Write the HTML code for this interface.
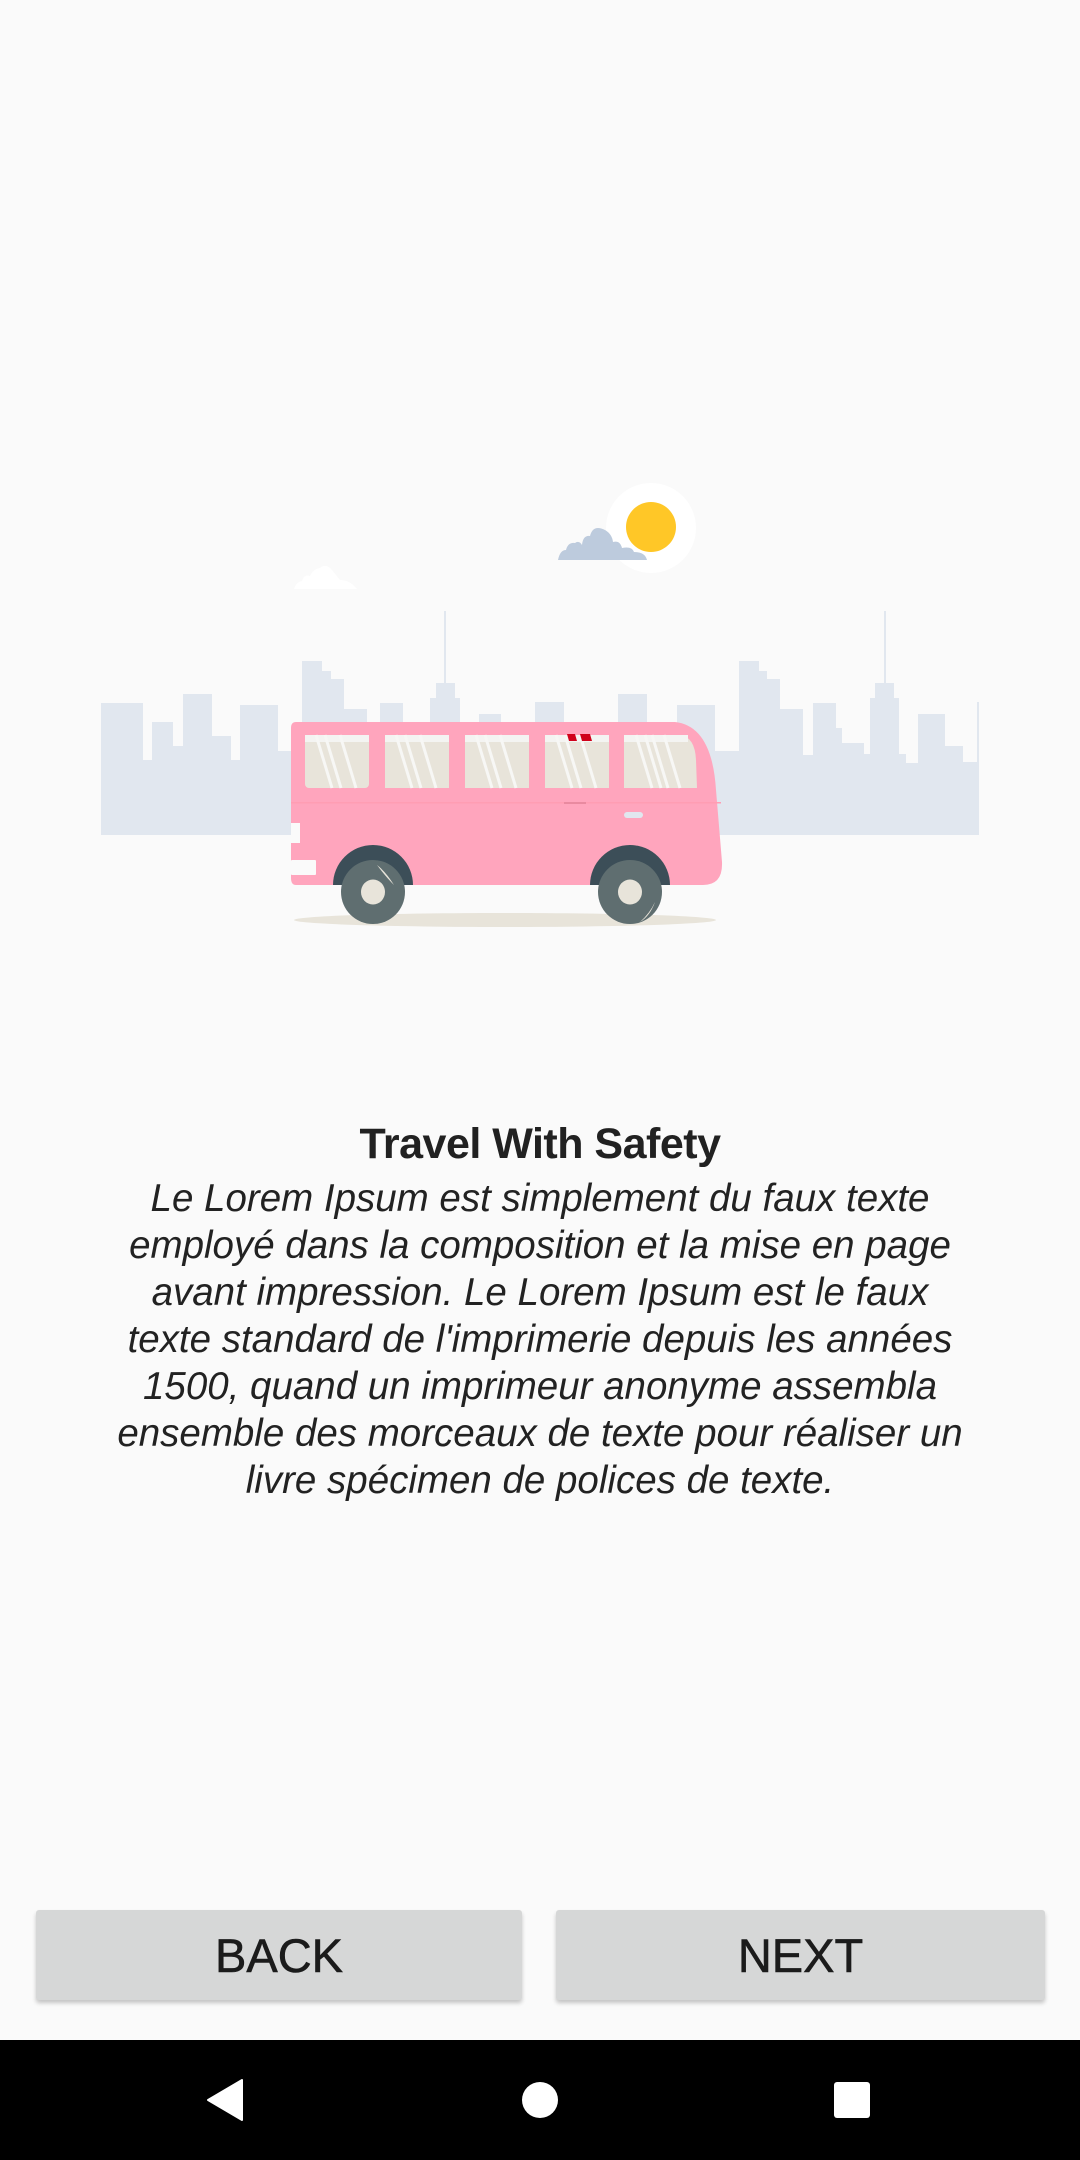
<!DOCTYPE html>
<html><head><meta charset="utf-8"><style>
html,body{margin:0;padding:0}
body{width:1080px;height:2160px;background:#FAFAFA;position:relative;overflow:hidden;font-family:"Liberation Sans",sans-serif}
.t{position:absolute;left:0;width:1080px;text-align:center;color:#212121;white-space:nowrap}
#title{top:1119px;font-size:43px;font-weight:bold;line-height:50px;letter-spacing:-0.5px}
#para{top:1175px;font-size:38.5px;font-style:italic;line-height:47px;color:#222}
.btn{position:absolute;top:1910px;height:90px;background:#D6D7D7;border-radius:3px;box-shadow:0 3px 4px rgba(0,0,0,0.22);font-size:47px;line-height:92px;text-align:center;color:#1b1b1b;-webkit-text-stroke:0.6px #1b1b1b}
#nav{position:absolute;top:2040px;left:0;width:1080px;height:120px;background:#000}
</style></head><body>
<svg width="1080" height="1000" style="position:absolute;left:0;top:0" viewBox="0 0 1080 1000">
<g fill="#E1E7EF">
<rect x="101" y="703" width="42" height="132"/><rect x="143" y="760" width="9" height="75"/>
<rect x="152" y="722" width="21" height="113"/><rect x="173" y="746" width="10" height="89"/>
<rect x="183" y="694" width="29" height="141"/><rect x="212" y="736" width="19" height="99"/>
<rect x="231" y="760" width="9" height="75"/><rect x="240" y="705" width="38" height="130"/>
<rect x="278" y="751" width="24" height="84"/><rect x="302" y="661" width="20" height="174"/>
<rect x="322" y="671" width="9" height="164"/><rect x="331" y="679" width="13" height="156"/>
<rect x="344" y="709" width="23" height="126"/><rect x="367" y="722" width="13" height="113"/>
<rect x="380" y="703" width="23" height="132"/><rect x="403" y="740" width="27" height="95"/>
<rect x="430" y="698" width="30" height="137"/><rect x="436" y="683" width="19" height="152"/>
<rect x="444" y="611" width="2" height="80"/>
<rect x="460" y="730" width="19" height="105"/><rect x="479" y="714" width="22" height="121"/>
<rect x="501" y="730" width="34" height="105"/><rect x="535" y="702" width="29" height="133"/>
<rect x="564" y="730" width="54" height="105"/><rect x="618" y="694" width="29" height="141"/>
<rect x="647" y="730" width="30" height="105"/><rect x="677" y="705" width="38" height="130"/>
<rect x="715" y="751" width="24" height="84"/><rect x="739" y="661" width="20" height="174"/>
<rect x="759" y="671" width="8" height="164"/><rect x="767" y="679" width="13" height="156"/>
<rect x="780" y="709" width="23" height="126"/><rect x="803" y="755" width="10" height="80"/>
<rect x="813" y="703" width="23" height="132"/><rect x="836" y="728" width="6" height="107"/>
<rect x="842" y="743" width="22" height="92"/><rect x="864" y="754" width="6" height="81"/>
<rect x="870" y="698" width="29" height="137"/><rect x="875" y="683" width="19" height="152"/>
<rect x="884" y="611" width="2" height="80"/>
<rect x="899" y="754" width="7" height="81"/><rect x="906" y="763" width="12" height="72"/>
<rect x="918" y="714" width="27" height="121"/><rect x="945" y="746" width="18" height="89"/>
<rect x="963" y="762" width="14" height="73"/><rect x="977" y="702" width="2" height="133"/>
</g>
<circle cx="651" cy="528" r="45" fill="#fff"/>
<circle cx="651" cy="527" r="25" fill="#FFC727"/>
<path d="M558 560 Q560 550 566 550 Q568 542 575 543 Q579 540 582 545 Q583 535 590 536 Q593 524 605 530 Q612 534 613 542 Q620 540 622 548 Q632 546 634 552 Q645 552 647 560 Z" fill="#BDCBDD"/>
<path d="M294 589 Q296 582 302 581 Q304 574 310 576 Q313 569 320 568 Q326 563 332 570 Q336 575 340 580 Q350 580 357 589 Z" fill="#fff"/>
<ellipse cx="505" cy="920" rx="211" ry="7" fill="#E8E4DA"/>
<path d="M296 722 H675 Q712 726 716 790 L722 862 Q723 885 703 885 H296 Q291 885 291 878 V728 Q291 722 296 722Z" fill="#FFA5BD"/>
<g fill="#E8E4DA">
<rect x="305" y="735" width="64" height="53" rx="4"/><rect x="385" y="735" width="64" height="53"/>
<rect x="465" y="735" width="64" height="53"/><rect x="545" y="735" width="64" height="53"/>
<path d="M624 735 H680 Q695 737 696 760 L697 788 H624Z"/>
</g>
<g fill="#F4F4F2">
<rect x="305" y="735" width="64" height="7"/><rect x="385" y="735" width="64" height="7"/>
<rect x="465" y="735" width="64" height="7"/><rect x="545" y="735" width="64" height="7"/><rect x="624" y="735" width="64" height="7"/>
</g>
<g stroke="#F7F7F5" stroke-width="3">
<path d="M316 735 L332 788 M325 735 L341 788 M340 735 L356 788"/>
<path d="M396 735 L412 788 M405 735 L421 788 M420 735 L436 788"/>
<path d="M476 735 L492 788 M485 735 L501 788 M500 735 L516 788"/>
<path d="M556 735 L572 788 M565 735 L581 788 M580 735 L596 788"/>
<path d="M636 735 L652 788 M645 735 L661 788 M652 735 L668 788 M664 735 L680 788"/>
</g>
<path d="M567 734 h8 l2 7 h-8z M580 734 h10 l2 7 h-10z" fill="#D0021B"/>
<rect x="291" y="802" width="430" height="1.5" fill="#FF9DB3"/>
<rect x="564" y="802" width="22" height="2" fill="#E98AA0"/>
<rect x="624" y="812" width="19" height="6" rx="3" fill="#E1E7EF"/>
<rect x="291" y="823" width="9" height="20" fill="#FAFAFA"/>
<rect x="291" y="860" width="25" height="15" rx="1" fill="#FAFAFA"/>
<path d="M333 885 A40 40 0 0 1 413 885Z" fill="#3C4E58"/>
<path d="M590 885 A40 40 0 0 1 670 885Z" fill="#3C4E58"/>
<circle cx="373" cy="892" r="32" fill="#5F6E70"/><circle cx="630" cy="892" r="32" fill="#5F6E70"/>
<ellipse cx="373" cy="892" rx="12" ry="12.5" fill="#E8E4DA"/><ellipse cx="630" cy="892" rx="12" ry="12.5" fill="#E8E4DA"/>
<path d="M377 865 Q386 872 394 885 Q386 877 377 865Z" fill="#E8E4DA"/>
<path d="M640 922 Q650 913 655 902 Q650 916 640 922Z" fill="#E8E4DA"/>
</svg>
<div class="t" id="title">Travel With Safety</div>
<div class="t" id="para">Le Lorem Ipsum est simplement du faux texte<br>employé dans la composition et la mise en page<br>avant impression. Le Lorem Ipsum est le faux<br>texte standard de l'imprimerie depuis les années<br>1500, quand un imprimeur anonyme assembla<br>ensemble des morceaux de texte pour réaliser un<br>livre spécimen de polices de texte.</div>
<div class="btn" style="left:36px;width:486px">BACK</div>
<div class="btn" style="left:556px;width:489px">NEXT</div>
<div id="nav">
<svg width="1080" height="120" style="position:absolute;left:0;top:0">
<path d="M242 40 V80 L208 60Z" fill="#fff" stroke="#fff" stroke-width="2" stroke-linejoin="round"/>
<ellipse cx="540" cy="60" rx="18" ry="18" fill="#fff"/>
<rect x="834" y="42" width="36" height="36" rx="3" fill="#fff"/>
</svg>
</div>
</body></html>
